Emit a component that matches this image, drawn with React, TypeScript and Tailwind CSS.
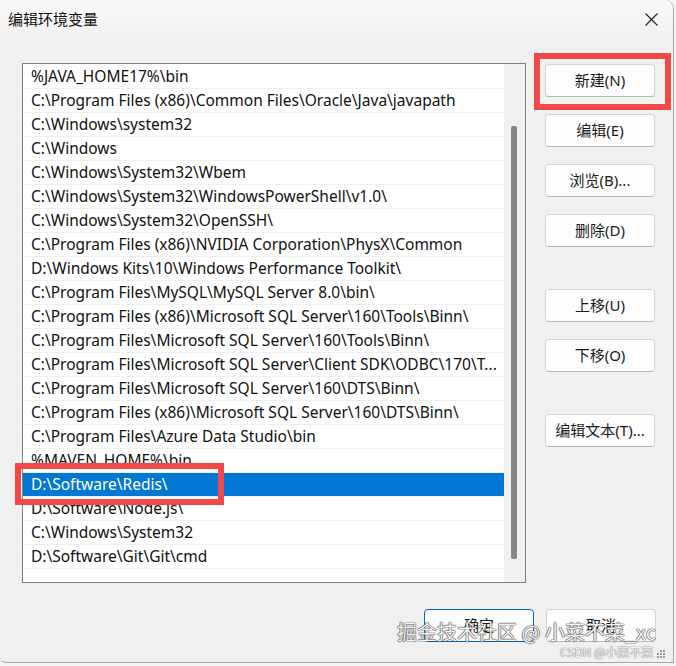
import React from 'react';

const paths = [
  '%JAVA_HOME17%\\bin',
  'C:\\Program Files (x86)\\Common Files\\Oracle\\Java\\javapath',
  'C:\\Windows\\system32',
  'C:\\Windows',
  'C:\\Windows\\System32\\Wbem',
  'C:\\Windows\\System32\\WindowsPowerShell\\v1.0\\',
  'C:\\Windows\\System32\\OpenSSH\\',
  'C:\\Program Files (x86)\\NVIDIA Corporation\\PhysX\\Common',
  'D:\\Windows Kits\\10\\Windows Performance Toolkit\\',
  'C:\\Program Files\\MySQL\\MySQL Server 8.0\\bin\\',
  'C:\\Program Files (x86)\\Microsoft SQL Server\\160\\Tools\\Binn\\',
  'C:\\Program Files\\Microsoft SQL Server\\160\\Tools\\Binn\\',
  'C:\\Program Files\\Microsoft SQL Server\\Client SDK\\ODBC\\170\\T...',
  'C:\\Program Files\\Microsoft SQL Server\\160\\DTS\\Binn\\',
  'C:\\Program Files (x86)\\Microsoft SQL Server\\160\\DTS\\Binn\\',
  'C:\\Program Files\\Azure Data Studio\\bin',
  '%MAVEN_HOME%\\bin',
  'D:\\Software\\Redis\\',
  'D:\\Software\\Node.js\\',
  'C:\\Windows\\System32',
  'D:\\Software\\Git\\Git\\cmd',
  '',
];

const SELECTED = 17;

function WinButton({ label, primary = false }: { label: string; primary?: boolean }) {
  return (
    <button
      className={`w-[110px] h-[33px] rounded-[4px] bg-[#fdfdfd] text-[15px] text-[#1a1a1a] border ${
        primary ? 'border-[#0067c0]' : 'border-[#d3d3d3] border-b-[#b8b8b8]'
      }`}
    >
      {label}
    </button>
  );
}

export default function App() {
  return (
    <div className="w-[676px] h-[666px] bg-[#f4f4f4] relative overflow-hidden font-['Noto_Sans','Noto_Sans_CJK_SC',sans-serif]">
      {/* dialog window */}
      <div className="w-[674px] h-[663px] bg-[#f0f0f0] rounded-tr-[9px] rounded-bl-[6px] border-r border-b border-[#a9a9a9] flex flex-col">
        {/* title bar */}
        <div className="h-[38px] flex items-center justify-between pl-[8px] pr-[15px] rounded-tr-[9px] bg-gradient-to-b from-[#f9f9fb] to-[#f0f0f0]">
          <span className="text-[15px] text-[#111] font-['Noto_Sans_CJK_SC',sans-serif]">编辑环境变量</span>
          <svg width="13" height="13" viewBox="0 0 13 13" className="mt-[1px]">
            <path d="M0.5 0.5 L12.5 12.5 M12.5 0.5 L0.5 12.5" stroke="#1c1c1c" strokeWidth="1.1" />
          </svg>
        </div>

        <div className="flex pl-[22px] pt-[25px]">
          {/* path list */}
          <div className="w-[504px] h-[520px] border border-[#7f7f7f] bg-white flex overflow-hidden">
            <div className="flex-1 pt-[1px]">
              {paths.map((p, i) => (
                <div
                  key={i}
                  className={`h-[24px] pl-[8px] pt-[1px] flex items-center text-[15.5px] leading-none border-b border-[#efefef] whitespace-nowrap ${
                    i === SELECTED ? 'bg-[#0078d4] text-white border-[#0078d4]' : 'text-[#111]'
                  }`}
                >
                  {p}
                </div>
              ))}
            </div>
            {/* scrollbar */}
            <div className="w-[21px] bg-[#f0f0f0] pt-[62px] pl-[7px]">
              <div className="w-[6px] h-[433px] bg-[#868686] rounded-[2px]" />
            </div>
          </div>

          {/* side buttons */}
          <div className="ml-[19px] pt-[1px] flex flex-col">
            <div className="flex flex-col gap-[17px]">
              <WinButton label="新建(N)" />
              <WinButton label="编辑(E)" />
              <WinButton label="浏览(B)..." />
              <WinButton label="删除(D)" />
            </div>
            <div className="flex flex-col gap-[17px] mt-[42px]">
              <WinButton label="上移(U)" />
              <WinButton label="下移(O)" />
            </div>
            <div className="mt-[42px]">
              <WinButton label="编辑文本(T)..." />
            </div>
          </div>
        </div>

        {/* OK / Cancel */}
        <div className="flex justify-end gap-[12px] pr-[17px] mt-[26px]">
          <WinButton label="确定" primary />
          <WinButton label="取消" />
        </div>
      </div>

      {/* annotation boxes */}
      <div className="absolute left-[534px] top-[53px] w-[137px] h-[57px] border-[6px] border-[#f24848]" />
      <div className="absolute left-[15px] top-[463px] w-[209px] h-[42px] border-[6px] border-[#f24848]" />

      {/* watermark */}
      <div className="absolute left-[397px] top-[622px] text-[20px] leading-none text-[#f4f4f4] font-['Noto_Sans_CJK_SC',sans-serif] [text-shadow:0_0_1px_#333,0_0_1px_#333,0_0_1px_#333]">
        掘金技术社区 @ 小菜不菜_xc
      </div>
      <div className="absolute left-[560px] top-[646px] text-[12px] leading-none text-[#f2f2f2] font-['Noto_Sans_CJK_SC',sans-serif] [text-shadow:0_0_1px_#777,0_0_1px_#777]">
        CSDN @小菜不菜
      </div>
      <div className="absolute left-[657px] top-[650px] grid grid-cols-3 gap-[1px]">
        {[0, 1, 2, 3, 4, 5, 6, 7, 8].map(i => (
          <div key={i} className={`w-[2px] h-[2px] ${i === 0 ? 'bg-transparent' : 'bg-[#9a9a9a]'}`} />
        ))}
      </div>
    </div>
  );
}
